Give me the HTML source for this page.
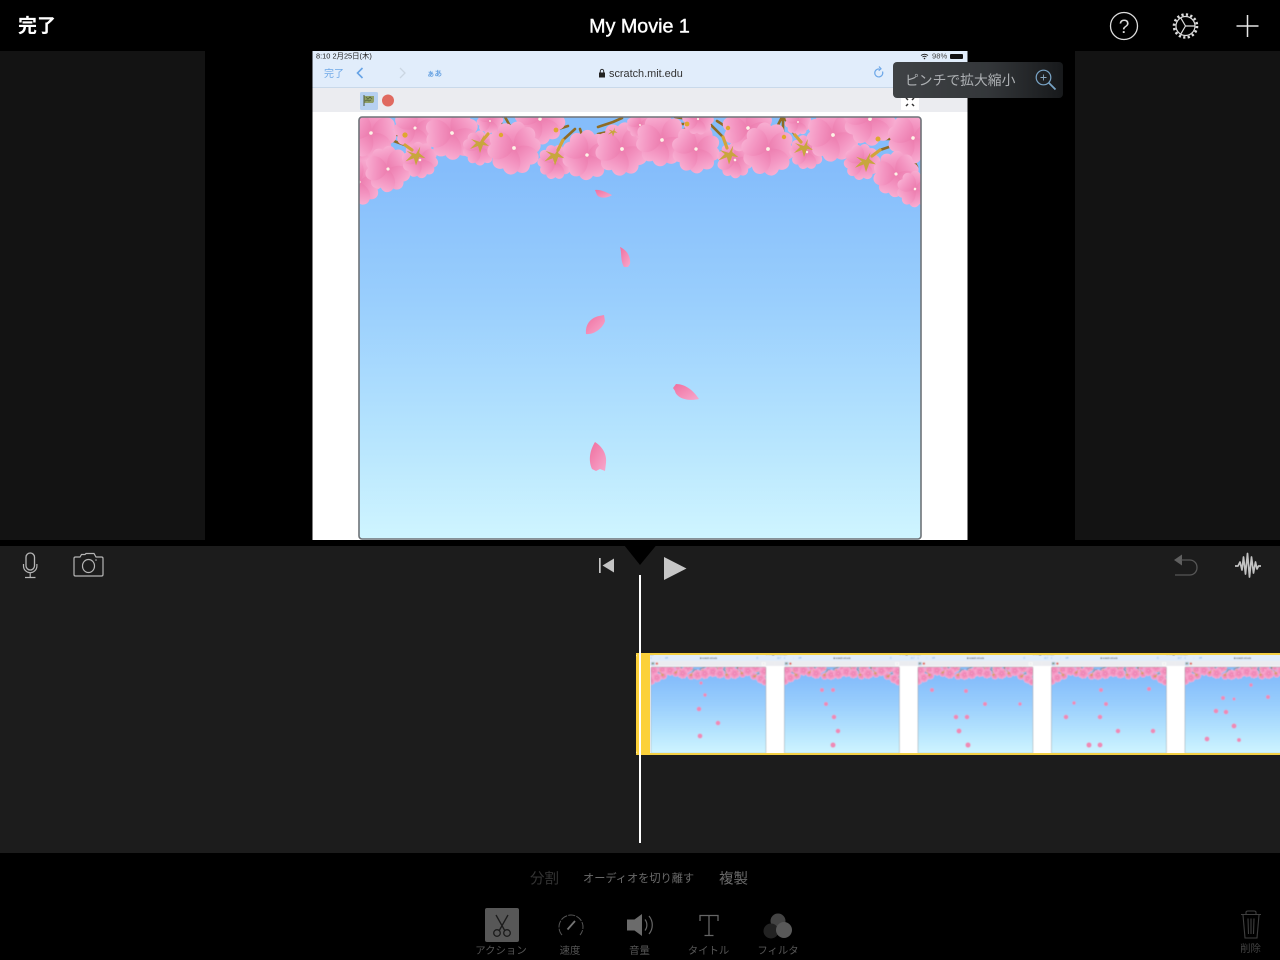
<!DOCTYPE html>
<html lang="ja"><head><meta charset="utf-8"><title>My Movie 1</title>
<style>
html,body{margin:0;padding:0;background:#000;width:1280px;height:960px;overflow:hidden}
svg{display:block}
text{font-family:"Liberation Sans","Noto Sans CJK JP",sans-serif}
</style></head><body>
<svg xmlns="http://www.w3.org/2000/svg" width="1280" height="960" viewBox="0 0 1280 960">
<defs>
<linearGradient id="sky" gradientUnits="userSpaceOnUse" x1="0" y1="170" x2="0" y2="539">
<stop offset="0" stop-color="#85bdfb"/><stop offset=".35" stop-color="#99cefd"/><stop offset=".7" stop-color="#b4e3fe"/><stop offset="1" stop-color="#cff5ff"/></linearGradient>
<linearGradient id="pet" x1="0" y1="1" x2="0" y2="0"><stop offset="0" stop-color="#ec7cae"/><stop offset=".5" stop-color="#f393c0"/><stop offset="1" stop-color="#f8aed2"/></linearGradient>
<linearGradient id="lp" x1="0" y1="0" x2="1" y2="1"><stop offset="0" stop-color="#f06f9e"/><stop offset="1" stop-color="#f7a8cd"/></linearGradient>
<linearGradient id="tip" x1="0" y1="0" x2="1" y2="0"><stop offset="0" stop-color="#3f4245"/><stop offset=".55" stop-color="#34373a"/><stop offset="1" stop-color="#17191b"/></linearGradient>
<clipPath id="skyclip"><rect x="359" y="117" width="562" height="422" rx="3"/></clipPath>
<clipPath id="strip"><rect x="636" y="653" width="644" height="102"/></clipPath>
<filter id="soft" x="0" y="0" width="100%" height="100%"><feGaussianBlur stdDeviation=".6"/></filter>
<g id="p"><path fill="url(#pet)" d="M0,0C-9,-3-15,-11-12,-19C-10,-24-4,-25,0,-21C4,-25,10,-24,12,-19C15,-11,9,-3,0,0Z"/></g>
<g id="f"><use href="#p"/><use href="#p" transform="rotate(72)"/><use href="#p" transform="rotate(144)"/><use href="#p" transform="rotate(216)"/><use href="#p" transform="rotate(288)"/><circle r="1.700" fill="#fdf3e6"/></g>
<g id="y"><path fill="#c8a63d" d="M0,0L-9,-3L-4,1L-10,7L-2,4L0,11L3,3L9,4L3,-1L4,-7Z"/></g>

<g id="scene">
<rect x="312.500" y="51" width="655" height="489" fill="#fff"/>
<rect x="312.500" y="51" width="655" height="36" fill="#e1edfb"/>
<rect x="312.500" y="87" width="655" height="1" fill="#c9d9ea"/>
<rect x="312.500" y="88" width="655" height="24" fill="#ebecf0"/>
<text x="316" y="58.500" font-size="7.400" fill="#222">8:10   2月25日(木)</text>
<text x="932" y="58.500" font-size="7.600" fill="#444">98%</text>
<path d="M921,55.500q3.500,-2.500 7,0M922.500,57q2,-1.500 4,0" stroke="#222" fill="none" stroke-width="1"/><circle cx="924.500" cy="58.500" r=".8" fill="#222"/>
<rect x="950" y="54" width="13" height="5" rx="1" fill="#111"/>
<text x="324" y="77" font-size="10" fill="#6ea8e8">完了</text>
<path d="M362.500,68L357.500,73L362.500,78" fill="none" stroke="#66a3e6" stroke-width="1.600"/>
<path d="M400,68L405,73L400,78" fill="none" stroke="#cbd6e2" stroke-width="1.300"/>
<text x="427" y="76" font-size="7.500" fill="#5f9de0" stroke="#5f9de0" stroke-width=".2">ぁあ</text>
<path d="M599,72.500h6v5h-6z" fill="#222"/><path d="M600.300,72.500v-1.500a1.700,1.700 0 0 1 3.400,0v1.500" fill="none" stroke="#222" stroke-width=".9"/>
<text x="609" y="77" font-size="10.900" fill="#333">scratch.mit.edu</text>
<path d="M882.500,71.500a4,4 0 1 1 -3,-2.500M879,66.500l2,2.300l-2.300,1.800" fill="none" stroke="#6ea8e8" stroke-width="1.200"/>
<rect x="360" y="92" width="18" height="18" rx="1.500" fill="#b6d0f0"/>
<path d="M364,96h10v5.500l-1,1.500h-9z" fill="#8f9f66"/><path d="M366,97l2,2l2,-2l2,2m-7,2l2,-1l2,1l2,-1" stroke="#57663e" stroke-width=".8" fill="none"/><path d="M364,95v11" stroke="#4e5a3c"/>
<circle cx="388" cy="100.500" r="6" fill="#e06a60"/>
<rect x="901" y="94" width="18" height="16" fill="#fff"/>
<path d="M906,98l2,2m6,-2l-2,2m-6,6l2,-2m6,2l-2,-2" stroke="#333" stroke-width="1.500"/>
<rect x="359" y="117" width="562" height="422" rx="3" fill="url(#sky)"/>
<g clip-path="url(#skyclip)">
<g fill="none" stroke="#8f6b24" stroke-width="2.600" stroke-linecap="round" stroke-linejoin="round">
<path d="M393,135H405M388,139L405,145M359,151L367,147M359,157L367,151M366,161L370,154M384,144L385,151"/>
<path d="M502,117L488,134M501,117V135M505,117L510,126M575,129L563,140M555,130L568,126M598,127L613,122L622,118M598,134L612,131M580,129L582,135"/>
<path d="M670,124H687M675,117L687,119M682,131L688,127M710,124L723,137M717,121L728,128M782,117L777,127M783,117V137M785,119L795,135M877,139H892M895,145L880,150M913,159L917,167"/>
</g>
<g><use href="#f" transform="translate(359,145) rotate(15) scale(.8)"/><use href="#f" transform="translate(359,182) rotate(40) scale(.95)"/><use href="#f" transform="translate(371,133) rotate(10) scale(1.050)"/><use href="#f" transform="translate(388,169) rotate(-15) scale(.95)"/><use href="#f" transform="translate(415,128) rotate(30) scale(.9)"/><use href="#f" transform="translate(420,160) rotate(10) scale(.75)"/><use href="#f" transform="translate(452,133) rotate(-20) scale(1.100)"/><use href="#f" transform="translate(480,148) rotate(18) scale(.72)"/><use href="#f" transform="translate(490,121) rotate(30) scale(.55)"/><use href="#f" transform="translate(540,119) rotate(10) scale(1.050)"/><use href="#f" transform="translate(514,148) rotate(-8) scale(1.100)"/><use href="#f" transform="translate(555,162) rotate(35) scale(.72)"/><use href="#f" transform="translate(587,155) rotate(20) scale(1.030)"/><use href="#f" transform="translate(622,149) rotate(-10) scale(1.100)"/><use href="#f" transform="translate(640,125) rotate(20) scale(.55)"/><use href="#f" transform="translate(662,140) rotate(-12) scale(1.080)"/><use href="#f" transform="translate(696,149) rotate(15) scale(1)"/><use href="#f" transform="translate(698,119) rotate(40) scale(.65)"/><use href="#f" transform="translate(735,160) rotate(-20) scale(.75)"/><use href="#f" transform="translate(748,128) rotate(-25) scale(1.050)"/><use href="#f" transform="translate(768,149) rotate(8) scale(1.100)"/><use href="#f" transform="translate(798,122) rotate(25) scale(.55)"/><use href="#f" transform="translate(807,152) rotate(35) scale(.72)"/><use href="#f" transform="translate(833,135) rotate(-10) scale(1.100)"/><use href="#f" transform="translate(870,119) rotate(12) scale(1.100)"/><use href="#f" transform="translate(862,162) rotate(30) scale(.75)"/><use href="#f" transform="translate(913,138) rotate(15) scale(1.050)"/><use href="#f" transform="translate(896,174) rotate(-15) scale(.95)"/><use href="#f" transform="translate(915,189) rotate(20) scale(.75)"/></g>
<g fill="none" stroke="#d3a43a" stroke-width="3.200" stroke-linecap="round"><path d="M405,145L412,150M488,134L483,140M563,140L558,150M723,137L727,148M795,135L801,142M880,150L872,156"/></g>
<g fill="#dfa72f"><circle cx="405" cy="135" r="2.600"/><circle cx="501" cy="135" r="2.200"/><circle cx="556" cy="130" r="2.400"/><circle cx="687" cy="124" r="2.400"/><circle cx="728" cy="128" r="2.200"/><circle cx="784" cy="137" r="2.200"/><circle cx="878" cy="139" r="2.500"/></g>
<use href="#y" transform="translate(416,154) scale(1.050)"/><use href="#y" transform="translate(480,142)"/><use href="#y" transform="translate(555,154) scale(1.050)"/><use href="#y" transform="translate(729,153) scale(1.050)"/><use href="#y" transform="translate(804,146)"/><use href="#y" transform="translate(866,160) scale(1.100)"/><use href="#y" transform="translate(613,131) scale(.5)"/>
</g>
<rect x="359" y="117" width="562" height="422" rx="3" fill="none" stroke="#6e7378" stroke-width="1.600"/>
</g>
</defs>

<rect width="1280" height="960" fill="#000"/>
<rect x="0" y="51" width="205" height="489" fill="#131313"/>
<rect x="1075" y="51" width="205" height="489" fill="#131313"/>
<rect x="0" y="546" width="1280" height="307" fill="#1c1c1c"/>

<!-- top bar -->
<text x="18" y="32" font-size="19" font-weight="700" fill="#fff">完了</text>
<text x="639.500" y="32.500" font-size="19.700" text-anchor="middle" fill="#fff" stroke="#fff" stroke-width=".4">My Movie 1</text>
<circle cx="1124" cy="26" r="13.500" fill="none" stroke="#dcdcdc" stroke-width="1.300"/>
<text x="1124" y="33" font-size="19" text-anchor="middle" fill="#dcdcdc">?</text>
<circle cx="1185.500" cy="26" r="9.500" fill="none" stroke="#dcdcdc" stroke-width="1.200"/>
<circle cx="1185.500" cy="26" r="11.500" fill="none" stroke="#dcdcdc" stroke-width="2.600" stroke-dasharray="2.200 2.320"/>
<path d="M1185.500,26H1195M1185.500,26L1180.700,17.800M1185.500,26L1180.700,34.200" stroke="#dcdcdc" stroke-width="1.200" fill="none"/>
<path d="M1247.500,15V37M1236.500,26H1258.500" stroke="#e6e6e6" stroke-width="1.500"/>

<use href="#scene"/>
<!-- big falling petals -->
<g fill="url(#lp)">
<path d="M595,190C600,189 608,193 612,195C608,198 600,199 597,195Z"/>
<path d="M620,247C627,250 631,257 630,264L628,267L624,267C620,260 622,253 620,247Z"/>
<path d="M586,334C585,325 590,318 599,316L604,315L605,321C603,328 594,335 586,334Z"/>
<path d="M699,399C693,390 685,384 676,384L673,388L675,391C676,397 686,402 699,399Z"/>
<path d="M595,442C603,447 607,455 606,463L605,471L600,469L596,471L592,469C588,460 590,450 595,442Z"/>
</g>

<!-- tooltip -->
<rect x="893" y="62" width="170" height="36" rx="4" fill="url(#tip)"/>
<text x="905" y="85" font-size="13.800" fill="#aeb1b4">ピンチで拡大縮小</text>
<circle cx="1043.500" cy="77.500" r="7.300" fill="none" stroke="#79a4c6" stroke-width="1.200"/>
<path d="M1040.500,77.500h6M1043.500,74.500v6" stroke="#8aa7be" stroke-width=".9"/>
<path d="M1049,83L1055.500,89.500" stroke="#79a4c6" stroke-width="1.800"/>

<!-- timeline controls -->
<rect x="26" y="553" width="8.500" height="17" rx="4.200" fill="none" stroke="#b5b5b5" stroke-width="1.300"/>
<path d="M23.500,564v2a6.700,6.700 0 0 0 13.400,0v-2M30.200,572.700V577.500M25,577.500H35.500" fill="none" stroke="#b5b5b5" stroke-width="1.200"/>
<path d="M75.500,557H80L81.500,554.500H85L86,553.500H94L96,557H101.500Q103,557 103,558.500V574.500Q103,576 101.500,576H75.500Q74,576 74,574.500V558.500Q74,557 75.500,557Z" fill="none" stroke="#b5b5b5" stroke-width="1.200"/>
<ellipse cx="88.500" cy="566" rx="6" ry="6.500" fill="none" stroke="#b5b5b5" stroke-width="1.200"/>
<circle cx="96" cy="560" r=".8" fill="#b5b5b5"/>
<rect x="599" y="558" width="1.700" height="15" fill="#c4c4c4"/>
<path d="M614,558.500V572.500L602.500,565.500Z" fill="#c4c4c4"/>
<path d="M624,545H656.500L640,565Z" fill="#000"/>
<path d="M664,557L686.500,568.500L664,580Z" fill="#c6c6c6"/>
<path d="M1174,560L1182,554.500V565.500Z" fill="#5f5f5f"/>
<path d="M1181,560H1189.500C1199.500,560 1199.500,575 1189.500,575H1175" fill="none" stroke="#565656" stroke-width="1.300"/>
<path d="M1235,566H1238L1240,562L1242,570L1243.500,557L1245.500,574L1247.500,553.500L1249.500,577L1251.500,557L1253.500,573L1255.500,562L1257,569L1258.500,566H1261" fill="none" stroke="#c2c2c2" stroke-width="1.700" stroke-linejoin="round"/>

<!-- clip strip -->
<g clip-path="url(#strip)">
<rect x="636" y="653" width="644" height="102" fill="#fff"/>
<g filter="url(#soft)">
<use href="#scene" transform="translate(577.500,643.050) scale(.2046)"/>
<use href="#scene" transform="translate(711,643.050) scale(.2046)"/>
<use href="#scene" transform="translate(844.500,643.050) scale(.2046)"/>
<use href="#scene" transform="translate(978,643.050) scale(.2046)"/>
<use href="#scene" transform="translate(1111.500,643.050) scale(.2046)"/>
<g fill="#ee8ab6">
<circle cx="701" cy="683" r="1.600"/><circle cx="705" cy="695" r="1.700"/><circle cx="699" cy="709" r="2.300"/><circle cx="718" cy="723" r="2.300"/><circle cx="700" cy="736" r="2.400"/>
<circle cx="822" cy="690" r="2"/><circle cx="833" cy="690" r="2"/><circle cx="826" cy="704" r="2"/><circle cx="834" cy="717" r="2.300"/><circle cx="838" cy="731" r="2.300"/><circle cx="833" cy="745" r="2.600"/>
<circle cx="932" cy="690" r="2"/><circle cx="966" cy="691" r="2"/><circle cx="985" cy="704" r="2"/><circle cx="1020" cy="704" r="1.700"/><circle cx="956" cy="717" r="2.300"/><circle cx="967" cy="717" r="2.300"/><circle cx="959" cy="731" r="2.500"/><circle cx="968" cy="745" r="2.600"/>
<circle cx="1101" cy="690" r="2"/><circle cx="1149" cy="689" r="2"/><circle cx="1074" cy="703" r="1.700"/><circle cx="1106" cy="704" r="2"/><circle cx="1066" cy="717" r="2.300"/><circle cx="1100" cy="717" r="2.300"/><circle cx="1118" cy="731" r="2.300"/><circle cx="1153" cy="731" r="2.300"/><circle cx="1089" cy="745" r="2.600"/><circle cx="1100" cy="745" r="2.500"/>
<circle cx="1251" cy="685" r="1.700"/><circle cx="1223" cy="698" r="2"/><circle cx="1234" cy="699" r="1.500"/><circle cx="1268" cy="697" r="2"/><circle cx="1216" cy="711" r="2.300"/><circle cx="1226" cy="712" r="2.300"/><circle cx="1234" cy="726" r="2.500"/><circle cx="1207" cy="739" r="2.400"/><circle cx="1239" cy="740" r="2"/>
</g>
</g>
<rect x="636" y="653" width="644" height="2" fill="#f3cf45"/>
<rect x="636" y="753" width="644" height="2" fill="#f3cf45"/>
<path d="M650,653H641Q636,653 636,658V750Q636,755 641,755H650Z" fill="#fcd13a"/>
</g>
<rect x="639" y="575" width="2" height="268" fill="#fff"/>

<!-- bottom toolbar -->
<text x="530" y="883.500" font-size="14.500" fill="#333">分割</text>
<text x="583" y="882" font-size="11.200" fill="#6a6a6a">オーディオを切り離す</text>
<text x="719" y="883.500" font-size="14.500" fill="#6a6a6a">複製</text>

<rect x="485" y="908" width="34" height="34" rx="2" fill="#575757"/>
<path d="M496,915L505,931M508,915L499,931" stroke="#1b1b1b" stroke-width="1.300" fill="none"/>
<circle cx="497" cy="933" r="3.300" fill="none" stroke="#1b1b1b" stroke-width="1.300"/>
<circle cx="507" cy="933" r="3.300" fill="none" stroke="#1b1b1b" stroke-width="1.300"/>
<text x="501" y="954" font-size="10.400" text-anchor="middle" fill="#555">アクション</text>

<path d="M562,935A12,12 0 1 1 580,935" fill="none" stroke="#555" stroke-width="1" stroke-dasharray="7 1.200"/>
<path d="M567.500,929.500L575,921" stroke="#747474" stroke-width="1.800"/>
<text x="570" y="954" font-size="10.400" text-anchor="middle" fill="#555">速度</text>

<path d="M627,919.500H634.500L642,914V936L634.500,930.500H627Z" fill="#6b6b6b"/>
<path d="M645,919.500a9,9 0 0 1 0,11M649,916a14,14 0 0 1 0,18" fill="none" stroke="#666" stroke-width="1.200"/>
<text x="639.500" y="954" font-size="10.400" text-anchor="middle" fill="#555">音量</text>

<path d="M700,921V915.500H718V921M709,915.500V935.500M704.500,935.500H713.500" fill="none" stroke="#666" stroke-width="1.300"/>
<text x="708.500" y="954" font-size="10.400" text-anchor="middle" fill="#555">タイトル</text>

<circle cx="778" cy="921" r="7.500" fill="#444"/>
<circle cx="771" cy="931" r="7.500" fill="#222"/>
<circle cx="784" cy="930" r="8" fill="#595959"/>
<text x="778" y="954" font-size="10.400" text-anchor="middle" fill="#555">フィルタ</text>

<path d="M1243,915L1245,938H1257L1259,915M1241,914.500H1261M1246,914.500V912.500Q1246,911 1248,911H1254Q1256,911 1256,912.500V914.500M1248,918.500L1248.500,934M1251,918.500V934M1254,918.500L1253.500,934" fill="none" stroke="#3f3f3f" stroke-width="1.100"/>
<text x="1250.500" y="952" font-size="10.400" text-anchor="middle" fill="#444">削除</text>
</svg>
</body></html>
